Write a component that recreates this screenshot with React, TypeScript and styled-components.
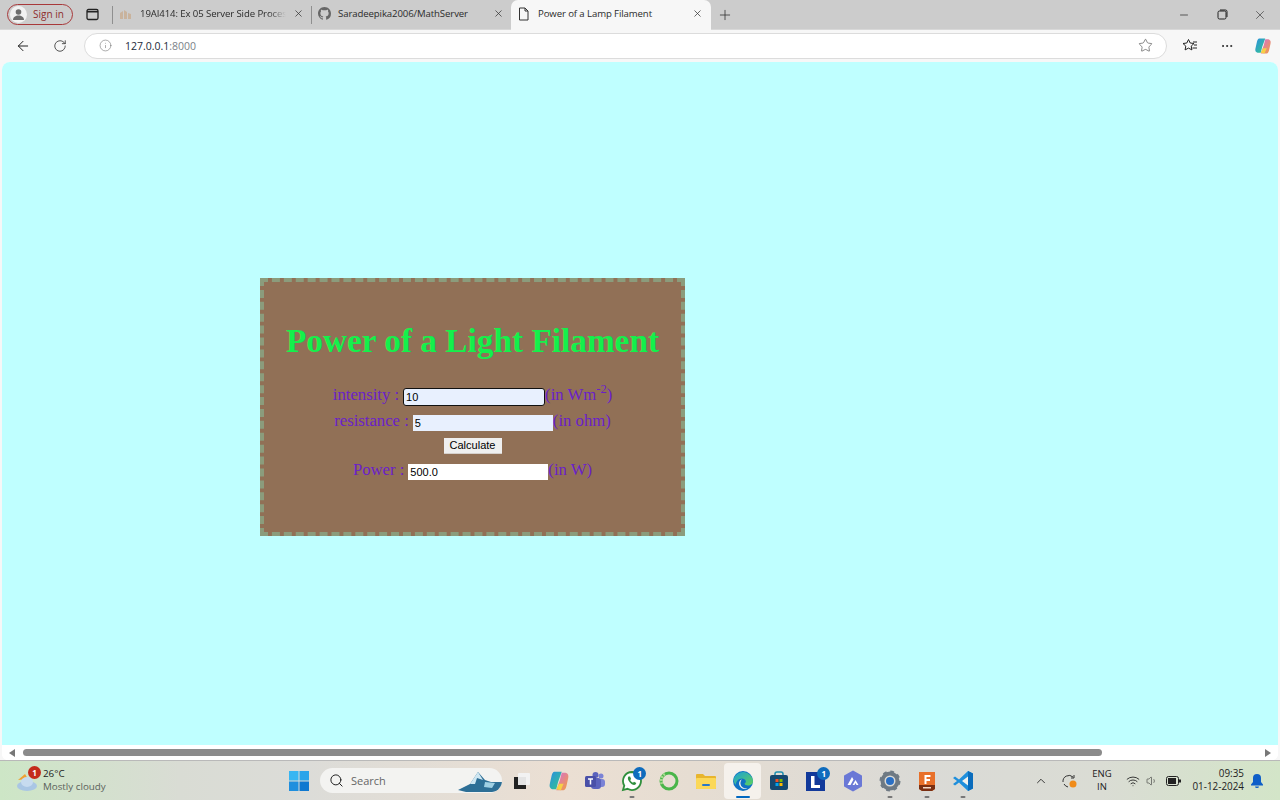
import React, { FunctionComponent, ReactNode } from 'react';
import styled, { createGlobalStyle } from 'styled-components';
import { ArrowLeft, ChevronUp, Ellipsis, Info, Minus, Plus, RotateCw, Search, Star, Volume1, Wifi, X } from 'lucide-react';

const GlobalStyle = createGlobalStyle`
  html, body {
    margin: 0;
    padding: 0;
    height: 100%;
    overflow: hidden;
  }
`;

const uiFont = '"Open Sans", "Noto Sans", sans-serif';

const Screen = styled.div`
  width: 1280px;
  height: 800px;
  display: flex;
  flex-direction: column;
  background: #f7f7f7;
  font-family: ${uiFont};
  color: #222;
`;

/* tab strip */
const TabStrip = styled.div`
  height: 29px;
  display: flex;
  align-items: flex-start;
  background: #cccccc;
  padding-left: 7px;
  position: relative;
  z-index: 1;
`;

const SignIn = styled.div`
  width: 66px;
  height: 21px;
  margin-top: 4px;
  box-sizing: border-box;
  border: 1px solid #a8383a;
  border-radius: 11px;
  display: flex;
  align-items: center;
  gap: 6px;
  padding: 0 0 1px 2px;
  font-size: 10px;
  color: #8e2c2e;
`;

const Avatar = styled.div`
  width: 17px;
  height: 17px;
  margin-top: 1px;
  border-radius: 50%;
  background: #f2f2f2;
  display: flex;
  align-items: center;
  justify-content: center;
`;

const CollectionsButton = styled.div`
  width: 39px;
  height: 29px;
  display: flex;
  align-items: center;
  justify-content: center;
`;

const TabDivider = styled.div`
  width: 1px;
  height: 18px;
  margin-top: 6px;
  background: #8f8f8f;
`;

const Tab = styled.div<{ $active?: boolean; $width: number }>`
  width: ${({ $width }) => $width}px;
  height: ${({ $active }) => ($active ? '32px' : '29px')};
  box-sizing: border-box;
  display: flex;
  align-items: center;
  padding: ${({ $active }) => ($active ? '0 8px 5px 6px' : '0 7px 2px 6px')};
  gap: 7px;
  font-size: 9.6px;
  letter-spacing: -0.1px;
  background: ${({ $active }) => ($active ? '#f7f7f7' : 'transparent')};
  border-radius: ${({ $active }) => ($active ? '7px 7px 0 0' : '0')};
`;

const TabTitle = styled.div<{ $fade?: boolean }>`
  flex: 1;
  overflow: hidden;
  white-space: nowrap;
  color: #2b2b2b;
  ${({ $fade }) =>
    $fade &&
    'mask-image: linear-gradient(to right, #000 88%, transparent 100%);'}
`;

const NewTab = styled.div`
  width: 28px;
  height: 29px;
  display: flex;
  align-items: center;
  justify-content: center;
`;

const WindowButtons = styled.div`
  margin-left: auto;
  display: flex;
  height: 29px;
  align-items: center;
  padding-right: 1px;
`;

const WindowButton = styled.div`
  width: 38px;
  display: flex;
  justify-content: center;
`;

/* toolbar */
const Toolbar = styled.div`
  height: 32px;
  box-sizing: border-box;
  display: flex;
  align-items: center;
  padding-left: 4px;
  border-top: 1px solid #d8d8d8;
`;

const ToolButton = styled.div<{ $width?: number }>`
  width: ${({ $width }) => $width ?? 37}px;
  display: flex;
  justify-content: center;
  align-items: center;
  flex-shrink: 0;
`;

const AddressBar = styled.div`
  width: 1083px;
  height: 26px;
  margin: 0 4px 0 6px;
  flex-shrink: 0;
  box-sizing: border-box;
  background: #fff;
  border: 1px solid #dcdcdc;
  border-radius: 13px;
  display: flex;
  align-items: center;
  padding: 0 13px 0 14px;
  font-size: 10.5px;
`;

const Url = styled.div`
  margin-left: 13px;
  flex: 1;
  color: #1c2b3a;
  span {
    color: #7b8288;
  }
`;

/* page */
const Viewport = styled.div`
  height: 698px;
  margin: 1px 2px 0;
  display: flex;
  flex-direction: column;
  border-radius: 8px 8px 6px 6px;
  overflow: hidden;
  background: #fff;
`;

const Page = styled.div`
  height: 683px;
  box-sizing: border-box;
  background: #bfffff;
  padding: 216px 0 0 258px;
`;

const Panel = styled.div`
  width: 425px;
  height: 258px;
  box-sizing: border-box;
  background: #917056;
  border: 4px dashed #8b9c7c;
  font-family: "Liberation Serif", "Times New Roman", serif;
  font-size: 16.7px;
  color: #6a1fc9;
  display: flex;
  flex-direction: column;
  align-items: center;
`;

const Title = styled.h1`
  margin: 40px 0 25px;
  height: 37px;
  line-height: 37px;
  font-size: 33.3px;
  font-weight: bold;
  color: #14f04b;
  white-space: nowrap;
`;

const FormRow = styled.div<{ $height: number }>`
  height: ${({ $height }) => $height}px;
  display: flex;
  align-items: center;
  white-space: nowrap;
`;

const RowLabel = styled.label`
  margin: 0 4px 5px 0;
`;

const RowUnit = styled.span`
  margin-bottom: 5px;
`;

const Field = styled.input<{ $filled?: boolean; $focused?: boolean }>`
  width: ${({ $focused }) => ($focused ? 142 : 140)}px;
  height: ${({ $focused }) => ($focused ? 18 : 16)}px;
  box-sizing: border-box;
  margin: 0;
  padding: 0 2px 1px;
  border: ${({ $focused }) => ($focused ? '1.5px solid #111' : 'none')};
  border-radius: ${({ $focused }) => ($focused ? '3px' : '0')};
  outline: none;
  background: ${({ $filled }) => ($filled ? '#e8f0fe' : '#fff')};
  font-family: "Liberation Sans", Arial, sans-serif;
  font-size: 11px;
  color: #000;
`;

const Sup = styled.sup`
  font-size: 12.5px;
  line-height: 0;
`;

const CalcButton = styled.button`
  width: 58px;
  height: 16px;
  padding: 0 0 1px;
  border: none;
  border-bottom: 1px solid #d5d0cc;
  background: #efefef;
  font-family: "Liberation Sans", Arial, sans-serif;
  font-size: 11px;
  color: #000;
`;

/* horizontal scrollbar */
const HScroll = styled.div`
  height: 15px;
  display: flex;
  align-items: center;
  background: #fff;
  padding: 0 7px;
`;

const ScrollTrack = styled.div`
  flex: 1;
  padding: 0 12px 0 8px;
`;

const ScrollThumb = styled.div`
  height: 7px;
  width: 1079px;
  border-radius: 4px;
  background: #8b8b8b;
`;

const ScrollArrow = styled.div<{ $right?: boolean }>`
  width: 0;
  height: 0;
  border-top: 4px solid transparent;
  border-bottom: 4px solid transparent;
  ${({ $right }) =>
    $right ? 'border-left: 6px solid #777;' : 'border-right: 6px solid #777;'}
`;

/* taskbar */
const Taskbar = styled.div`
  height: 40px;
  box-sizing: border-box;
  border-top: 1px solid #b9b9b9;
  display: flex;
  align-items: center;
  background: linear-gradient(
    90deg,
    #cde6c6 0%,
    #d9dcd4 14%,
    #dcdcd8 24%,
    #ebdfd3 44%,
    #e6ddd2 54%,
    #dadad6 72%,
    #dadcd4 86%,
    #d3e5c8 100%
  );
  position: relative;
`;

const Weather = styled.div`
  width: 280px;
  display: flex;
  align-items: center;
  padding-left: 16px;
  box-sizing: border-box;
  gap: 5px;
  font-size: 9.8px;
  line-height: 13px;
`;

const WeatherText = styled.div`
  margin-bottom: 2px;
`;

const WeatherIcon = styled.div`
  position: relative;
  width: 22px;
  height: 24px;
`;

const Badge = styled.div<{ $color: string }>`
  position: absolute;
  top: -3px;
  right: -3px;
  width: 13px;
  height: 13px;
  border-radius: 50%;
  background: ${({ $color }) => $color};
  color: #fff;
  font-size: 8px;
  font-weight: 700;
  line-height: 13px;
  text-align: center;
`;

const WeatherCondition = styled.div`
  color: #5c635c;
`;

const StartSlot = styled.div`
  width: 37px;
  display: flex;
  justify-content: center;
`;

const SearchPill = styled.div`
  width: 182px;
  height: 25px;
  margin: 0 1.5px 0 3px;
  border-radius: 13px;
  background: #f3f3f1;
  display: flex;
  align-items: center;
  padding-left: 9px;
  box-sizing: border-box;
  font-size: 11px;
  color: #666;
  gap: 7px;
  position: relative;
  overflow: hidden;
`;

const SearchArt = styled.svg`
  position: absolute;
  right: 0;
  top: 2px;
`;

const AppSlot = styled.div<{ $active?: boolean; $running?: boolean }>`
  width: 36.8px;
  height: 36px;
  box-sizing: border-box;
  display: flex;
  align-items: center;
  justify-content: center;
  position: relative;
  border-radius: 4px;
  background: ${({ $active }) => ($active ? '#f5f1ec' : 'transparent')};

  ${({ $running, $active }) =>
    ($running || $active) &&
    `&::after {
      content: '';
      position: absolute;
      bottom: 1px;
      left: 50%;
      transform: translateX(-50%);
      width: ${$active ? 14 : 5}px;
      height: 2px;
      border-radius: 1px;
      background: ${$active ? '#0067c0' : '#777'};
    }`}
`;

const AppIcon = styled.div`
  position: relative;
  width: 22px;
  height: 22px;
`;

const Tray = styled.div`
  position: absolute;
  right: 10px;
  top: 0;
  bottom: 0;
  display: flex;
  align-items: center;
`;

const TraySlot = styled.div<{ $width: number }>`
  width: ${({ $width }) => $width}px;
  display: flex;
  justify-content: center;
  align-items: center;
`;

const Lang = styled.div`
  width: 36px;
  margin-bottom: 2px;
  text-align: center;
  font-size: 9.5px;
  line-height: 13px;
`;

const Clock = styled.div`
  width: 52px;
  margin: 0 0 2px 4px;
  text-align: right;
  font-size: 9.9px;
  line-height: 13px;
  white-space: nowrap;
`;

const Bell = styled.div`
  width: 26px;
  display: flex;
  justify-content: center;
`;

const CopilotMark: FunctionComponent<{ size: number }> = ({ size }) => (
  <svg width={size} height={size} viewBox="0 0 24 24">
    <defs>
      <linearGradient id={`cpa${size}`} x1="0" y1="0" x2="1" y2="1">
        <stop offset="0" stopColor="#2a8fe0" />
        <stop offset="1" stopColor="#36c98a" />
      </linearGradient>
      <linearGradient id={`cpb${size}`} x1="0" y1="0" x2="1" y2="1">
        <stop offset="0" stopColor="#d36cd8" />
        <stop offset="1" stopColor="#f4a13c" />
      </linearGradient>
    </defs>
    <path d="M7 2h8l-4 11-2 8H6c-3 0-5-2-4-6l2-9c.5-2 1.500-4 3-4z" fill={`url(#cpa${size})`} />
    <path d="M17 22H9l4-11 2-8h3c3 0 5 2 4 6l-2 9c-.5 2-1.500 4-3 4z" fill={`url(#cpb${size})`} />
    <path d="M9 21l3-6h5l-3 7z" fill="#f7d046" />
  </svg>
);

const apps: { key: string; running?: boolean; active?: boolean; badge?: string; icon: ReactNode }[] = [
  {
    key: 'taskview',
    icon: (
      <svg width="22" height="22" viewBox="0 0 22 22">
        <rect x="7" y="3" width="12" height="12" rx="1" fill="#f2f2f2" />
        <rect x="3" y="7" width="12" height="12" fill="#222" />
        <rect x="7" y="7" width="8" height="8" fill="#e4e4e4" />
      </svg>
    ),
  },
  { key: 'copilot', icon: <CopilotMark size={22} /> },
  {
    key: 'teams',
    icon: (
      <svg width="22" height="22" viewBox="0 0 22 22">
        <circle cx="17" cy="6" r="2.500" fill="#7b83d6" />
        <circle cx="11.500" cy="5" r="3" fill="#5b63bd" />
        <rect x="13" y="9" width="8" height="8" rx="3" fill="#7b83d6" />
        <rect x="7" y="8" width="10" height="11" rx="3" fill="#5b63bd" />
        <rect x="1" y="6" width="11" height="11" rx="1.500" fill="#4a50a8" />
        <path d="M4 9h5M6.500 9v5.500" stroke="#fff" strokeWidth="1.500" />
      </svg>
    ),
  },
  {
    key: 'whatsapp',
    running: true,
    badge: '1',
    icon: (
      <svg width="22" height="22" viewBox="0 0 22 22">
        <path d="M11 2a9 9 0 0 0-7.700 13.600L2 20l4.500-1.200A9 9 0 1 0 11 2z" fill="#fff" stroke="#2f8f3c" strokeWidth="1.800" />
        <path d="M7.500 6.500c-1 1-1 3 1 5.500s4.500 3.500 6 2.500l.8-1.500-2.300-1.200-1 1c-1-.4-2.200-1.600-2.800-2.800l.9-1-1-2.400z" fill="#2f8f3c" />
      </svg>
    ),
  },
  {
    key: 'ring',
    icon: (
      <svg width="22" height="22" viewBox="0 0 22 22">
        <circle cx="11" cy="11" r="8" fill="none" stroke="#49b54a" strokeWidth="3" />
        <path d="M4 14a8 8 0 0 1 3-10" fill="none" stroke="#a8d890" strokeWidth="3" strokeDasharray="2 1" />
      </svg>
    ),
  },
  {
    key: 'folder',
    icon: (
      <svg width="22" height="22" viewBox="0 0 22 22">
        <path d="M1 5a1 1 0 0 1 1-1h6l2 2h10a1 1 0 0 1 1 1v11a1 1 0 0 1-1 1H2a1 1 0 0 1-1-1z" fill="#e8b52e" />
        <rect x="1" y="8" width="20" height="11" rx="1" fill="#fbd858" />
        <rect x="7" y="14" width="8" height="2" rx="1" fill="#2a78c8" />
      </svg>
    ),
  },
  {
    key: 'edge',
    active: true,
    icon: (
      <svg width="22" height="22" viewBox="0 0 22 22">
        <defs>
          <linearGradient id="edgeTop" x1="0" y1="0" x2="1" y2="1">
            <stop offset="0" stopColor="#1a9fd8" />
            <stop offset="1" stopColor="#5fd25a" />
          </linearGradient>
        </defs>
        <circle cx="11" cy="11" r="10" fill="#0f72c4" />
        <path d="M1.500 9A10 10 0 0 1 21 11c0 3-2.500 4.500-5 4.500-2 0-3.500-1-3.500-2 2.500-1 1.500-5-2.500-5-4 0-6.500 3.500-6 6.500C2.500 13.500 1.500 11.500 1.500 9z" fill="url(#edgeTop)" />
        <path d="M10 9.500c-2.500.5-3.500 3.500-2.500 6s4 4.500 8 3c-4 .2-6.500-1.500-7-4.500-.2-1.800.3-3.500 1.500-4.500z" fill="#f5f1ec" />
      </svg>
    ),
  },
  {
    key: 'store',
    icon: (
      <svg width="22" height="22" viewBox="0 0 22 22">
        <path d="M7 6V4a2 2 0 0 1 2-2h4a2 2 0 0 1 2 2v2" fill="none" stroke="#1d8fb0" strokeWidth="1.500" />
        <rect x="2" y="5" width="18" height="15" rx="2" fill="#15486f" />
        <rect x="7.500" y="9" width="3" height="3" fill="#f25022" />
        <rect x="11.500" y="9" width="3" height="3" fill="#7fba00" />
        <rect x="7.500" y="13" width="3" height="3" fill="#00a4ef" />
        <rect x="11.500" y="13" width="3" height="3" fill="#ffb900" />
      </svg>
    ),
  },
  {
    key: 'lens',
    badge: '1',
    icon: (
      <svg width="22" height="22" viewBox="0 0 22 22">
        <rect x="1" y="2" width="19" height="19" fill="#12399a" />
        <path d="M6 6h3.500v9H15v3H6z" fill="#fff" />
      </svg>
    ),
  },
  {
    key: 'arc',
    icon: (
      <svg width="22" height="22" viewBox="0 0 22 22">
        <path d="M11 1.500l8 4.500v10l-8 4.500-8-4.500V6z" fill="#6a78d6" strokeLinejoin="round" stroke="#6a78d6" strokeWidth="2" />
        <path d="M5.500 15L10 7l1.500 2.500L8.500 15zM10.500 15l3-5 3 5h-2l-1-2-1 2z" fill="#fff" />
      </svg>
    ),
  },
  {
    key: 'settings',
    running: true,
    icon: (
      <svg width="22" height="22" viewBox="0 0 22 22">
        <circle cx="11" cy="11" r="7.500" fill="none" stroke="#6f7a84" strokeWidth="4" />
        <circle cx="11" cy="11" r="9" fill="none" stroke="#6f7a84" strokeWidth="3" strokeDasharray="3.500 3.570" />
        <circle cx="11" cy="11" r="4" fill="#2a6fc4" />
      </svg>
    ),
  },
  {
    key: 'fusion',
    running: true,
    icon: (
      <svg width="22" height="22" viewBox="0 0 22 22">
        <path d="M3 2h16v17l-3 2H6l-3-2z" fill="#e8702a" />
        <path d="M3 15h16v4l-3 2H6l-3-2z" fill="#7a2f12" />
        <path d="M8.500 5h6v2h-4v2h3.500v2H10.500v3h-2z" fill="#fff" />
        <path d="M7 17h8v1.500H7z" fill="#f4d9c8" />
      </svg>
    ),
  },
  {
    key: 'vscode',
    running: true,
    icon: (
      <svg width="22" height="22" viewBox="0 0 22 22">
        <path d="M16 1l5 2.500v15L16 21 7 12.500l-4 3L1 14l4-3-4-3 2-1.500 4 3z" fill="#1f8fdc" />
        <path d="M16 6.500L10 11l6 4.500z" fill="#f2f2ee" />
        <path d="M16 1l5 2.500v15L16 21z" fill="#0a6cbc" />
      </svg>
    ),
  },
];

const App: FunctionComponent = () => (
  <Screen>
    <GlobalStyle />
    <TabStrip>
      <SignIn>
        <Avatar>
          <svg width="13" height="13" viewBox="0 0 13 13">
            <circle cx="6.500" cy="4" r="2.800" fill="#6e6e6e" />
            <path d="M1 12c0-3 2.500-4.500 5.500-4.500S12 9 12 12z" fill="#6e6e6e" />
          </svg>
        </Avatar>
        Sign in
      </SignIn>
      <CollectionsButton>
        <svg width="13" height="13" viewBox="0 0 13 13">
          <rect x="1" y="1.500" width="11" height="10" rx="1.500" fill="none" stroke="#222" strokeWidth="1.300" />
          <path d="M1 3h11v1.500H1z" fill="#222" />
        </svg>
      </CollectionsButton>
      <TabDivider />
      <Tab $width={198}>
        <svg width="14" height="13" viewBox="0 0 14 13" opacity="0.7">
          <path d="M1 12V6l3-2v8zM5 12V3l3 2v7zM9 12V6l3 1v5z" fill="#c9a98a" />
        </svg>
        <TabTitle $fade>19AI414: Ex 05 Server Side Proces</TabTitle>
        <X size={11} strokeWidth={1.6} color="#333" />
      </Tab>
      <TabDivider />
      <Tab $width={199}>
        <svg width="13" height="13" viewBox="0 0 16 16">
          <path
            fill="#666"
            d="M8 0C3.580 0 0 3.580 0 8c0 3.540 2.290 6.530 5.470 7.590.4.070.55-.17.55-.38 0-.19-.01-.82-.01-1.490-2.010.37-2.530-.49-2.690-.94-.09-.23-.48-.94-.82-1.130-.28-.15-.68-.52-.01-.53.63-.01 1.080.58 1.230.82.720 1.210 1.870.87 2.330.66.070-.52.280-.87.510-1.070-1.780-.2-3.640-.89-3.640-3.950 0-.87.310-1.590.820-2.150-.08-.2-.36-1.020.08-2.120 0 0 .67-.21 2.200.82.640-.18 1.320-.27 2-.27s1.360.09 2 .27c1.530-1.040 2.200-.82 2.200-.82.440 1.100.160 1.920.080 2.120.510.560.820 1.270.820 2.150 0 3.070-1.870 3.750-3.650 3.950.290.250.540.730.540 1.480 0 1.070-.01 1.930-.01 2.200 0 .210.150.460.550.380A8.010 8.010 0 0 0 16 8c0-4.420-3.580-8-8-8z"
          />
        </svg>
        <TabTitle>Saradeepika2006/MathServer</TabTitle>
        <X size={11} strokeWidth={1.6} color="#333" />
      </Tab>
      <Tab $active $width={200}>
        <svg width="14" height="14" viewBox="0 0 14 14">
          <path d="M2.500 1h5.500l3 3v9h-8.500z M8 1v3h3" fill="none" stroke="#333" strokeWidth="1" />
        </svg>
        <TabTitle>Power of a Lamp Filament</TabTitle>
        <X size={11} strokeWidth={1.6} color="#333" />
      </Tab>
      <NewTab>
        <Plus size={16} strokeWidth={1.2} color="#333" />
      </NewTab>
      <WindowButtons>
        <WindowButton>
          <Minus size={12} strokeWidth={1.4} color="#222" />
        </WindowButton>
        <WindowButton>
          <svg width="11" height="11" viewBox="0 0 11 11">
            <rect x="1" y="2" width="8" height="8" rx="1.500" fill="none" stroke="#222" />
            <path d="M3 1h5.500A1.500 1.500 0 0 1 10 2.500V8" fill="none" stroke="#222" />
          </svg>
        </WindowButton>
        <WindowButton>
          <X size={14} strokeWidth={1} color="#222" />
        </WindowButton>
      </WindowButtons>
    </TabStrip>
    <Toolbar>
      <ToolButton>
        <ArrowLeft size={16} strokeWidth={1.5} color="#222" />
      </ToolButton>
      <ToolButton>
        <RotateCw size={14} strokeWidth={1.4} color="#333" />
      </ToolButton>
      <AddressBar>
        <Info size={13} strokeWidth={1} color="#666" />
        <Url>
          127.0.0.1<span>:8000</span>
        </Url>
        <Star size={15} strokeWidth={1} color="#444" />
      </AddressBar>
      <ToolButton $width={38}>
        <svg width="16" height="15" viewBox="0 0 16 15">
          <path d="M6.500 1.500l1.700 3.500 3.800.5-2.800 2.600.7 3.800-3.400-1.800-3.400 1.800.7-3.800L1 5.500 4.800 5z" fill="none" stroke="#222" strokeWidth="1" />
          <path d="M11 4h4M12 7h3M10.500 10h4.500" stroke="#222" strokeWidth="1" />
        </svg>
      </ToolButton>
      <ToolButton $width={36}>
        <Ellipsis size={14} strokeWidth={1.6} color="#222" />
      </ToolButton>
      <ToolButton $width={35}>
        <CopilotMark size={18} />
      </ToolButton>
    </Toolbar>
    <Viewport>
      <Page>
        <Panel>
          <Title>Power of a Light Filament</Title>
          <FormRow $height={26}>
            <RowLabel>intensity :</RowLabel>
            <Field $filled $focused defaultValue="10" />
            <RowUnit>
              (in Wm<Sup>-2</Sup>)
            </RowUnit>
          </FormRow>
          <FormRow $height={26}>
            <RowLabel>resistance :</RowLabel>
            <Field $filled defaultValue="5" />
            <RowUnit>(in ohm)</RowUnit>
          </FormRow>
          <FormRow $height={20}>
            <CalcButton>Calculate</CalcButton>
          </FormRow>
          <FormRow $height={32}>
            <RowLabel>Power :</RowLabel>
            <Field defaultValue="500.0" />
            <RowUnit>(in W)</RowUnit>
          </FormRow>
        </Panel>
      </Page>
      <HScroll>
        <ScrollArrow />
        <ScrollTrack>
          <ScrollThumb />
        </ScrollTrack>
        <ScrollArrow $right />
      </HScroll>
    </Viewport>
    <Taskbar>
      <Weather>
        <WeatherIcon>
          <svg width="22" height="24" viewBox="0 0 22 24">
            <path d="M2 11l7-6 3 5z" fill="#f0a030" />
            <ellipse cx="11" cy="17" rx="10" ry="5" fill="#a9c6e4" />
            <ellipse cx="11" cy="13" rx="6" ry="5" fill="#c7dbef" />
          </svg>
          <Badge $color="#c42b1c">1</Badge>
        </WeatherIcon>
        <WeatherText>
          <div>26°C</div>
          <WeatherCondition>Mostly cloudy</WeatherCondition>
        </WeatherText>
      </Weather>
      <StartSlot>
        <svg width="20" height="20" viewBox="0 0 20 20">
          <rect x="0" y="0" width="9.500" height="9.500" fill="#38b6f2" />
          <rect x="10.500" y="0" width="9.500" height="9.500" fill="#2ba4ea" />
          <rect x="0" y="10.500" width="9.500" height="9.500" fill="#1f8fde" />
          <rect x="10.500" y="10.500" width="9.500" height="9.500" fill="#0f78d0" />
        </svg>
      </StartSlot>
      <SearchPill>
        <Search size={15} strokeWidth={1.6} color="#222" />
        Search
        <SearchArt width="44" height="22" viewBox="0 0 44 22">
          <path d="M0 20L12 14 20 2l7 8 6 2 11 0v8l-10 2H8z" fill="#2d6f96" />
          <path d="M12 14L20 2l5 8-6-2-2 6z" fill="#cfe7f2" />
          <path d="M27 12l10 1-3 5-8-1z" fill="#9fd0e4" />
        </SearchArt>
      </SearchPill>
      {apps.map(app => (
        <AppSlot key={app.key} $active={app.active} $running={app.running}>
          <AppIcon>
            {app.icon}
            {app.badge && <Badge $color="#0f6cbd">{app.badge}</Badge>}
          </AppIcon>
        </AppSlot>
      ))}
      <Tray>
        <TraySlot $width={26}>
          <ChevronUp size={14} strokeWidth={1.5} color="#222" />
        </TraySlot>
        <TraySlot $width={30}>
          <svg width="18" height="18" viewBox="0 0 18 18">
            <path d="M3 10a6 6 0 0 1 10-5M14 3v3h-3M4 12a6 6 0 0 0 4 3" fill="none" stroke="#333" strokeWidth="1" />
            <circle cx="13" cy="12" r="3.500" fill="#f08c1a" />
          </svg>
        </TraySlot>
        <Lang>
          ENG
          <br />
          IN
        </Lang>
        <TraySlot $width={26}>
          <Wifi size={14} strokeWidth={1.5} color="#222" />
        </TraySlot>
        <TraySlot $width={12}>
          <Volume1 size={14} strokeWidth={1.2} color="#333" />
        </TraySlot>
        <TraySlot $width={30}>
          <svg width="15" height="10" viewBox="0 0 15 10">
            <rect x="0.500" y="0.500" width="12" height="9" rx="2" fill="none" stroke="#222" />
            <rect x="2" y="2" width="8" height="6" fill="#222" />
            <rect x="13" y="3.500" width="2" height="3" fill="#222" />
          </svg>
        </TraySlot>
        <Clock>
          09:35
          <br />
          01-12-2024
        </Clock>
        <Bell>
          <svg width="12" height="14" viewBox="0 0 12 14">
            <path d="M6 0a4 4 0 0 0-4 4v4L0 10.500V11.500h12v-1L10 8V4a4 4 0 0 0-4-4zM4 12.500a2 1.500 0 0 0 4 0z" fill="#0f5fc8" />
          </svg>
        </Bell>
      </Tray>
    </Taskbar>
  </Screen>
);

export default App;
